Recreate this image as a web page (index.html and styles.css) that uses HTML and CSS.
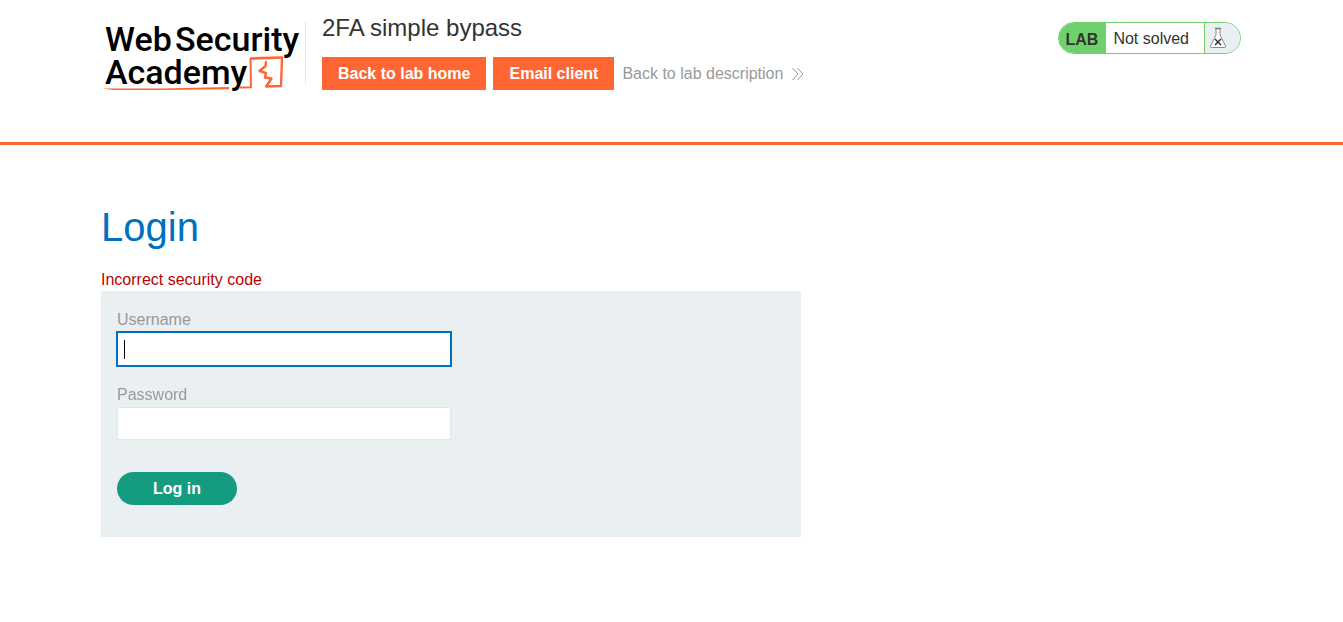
FILE: index.html
```html
<!DOCTYPE html>
<html lang="en">
<head>
<meta charset="utf-8">
<meta name="viewport" content="width=device-width, initial-scale=1">
<title>2FA simple bypass</title>
<link rel="stylesheet" href="styles.css">
</head>
<body>
<header class="lab-header">
  <div class="container lab-header-row">
    <a class="logo" href="#" aria-label="Web Security Academy">
      <svg width="204" height="72" viewBox="0 0 204 72">
        <g class="logo-text">
          <text x="4" y="29">Web</text>
          <text x="74" y="29">Security</text>
          <text x="4" y="62">Academy</text>
        </g>
        <g fill="none" stroke="#ff6633" stroke-linejoin="round" stroke-linecap="round">
          <path fill="#ff6633" stroke="none" d="M1 66.500L60 66.500L128 65V67.200L60 68L12 68Z"/>
          <path stroke-width="2" d="M139 65.500L150 65.200L149.500 37"/>
          <path stroke-width="2.600" d="M150 36.500L181 35.500"/>
          <path stroke-width="2.300" d="M181 36L180 64L165 64.500"/>
          <path stroke-width="2.400" d="M165 40L164.500 44L158.500 49L165 51L164 55.500L170.500 56.500L165.500 64"/>
        </g>
      </svg>
    </a>
    <div class="lab-title">
      <h2>2FA simple bypass</h2>
      <nav class="lab-links">
        <a class="button-orange" href="#">Back to lab home</a>
        <a class="button-orange" href="#">Email client</a>
        <a class="link-back" href="#">Back to lab description
          <svg width="12" height="14" viewBox="0 0 12 14" fill="none" stroke="#9a9a9a" stroke-width="1"><path d="M.5 1L6 7L.5 13M5.5 1L11 7L5.5 13"/></svg>
        </a>
      </nav>
    </div>
    <div class="lab-status">
      <span class="status-tag">LAB</span>
      <span class="status-text">Not solved</span>
      <span class="status-icon">
        <svg width="18" height="22" viewBox="0 0 18 22" fill="none">
          <path fill="#fff" stroke="#8a8a8a" d="M7 1.500V8L1.500 19Q1 20.500 2.500 20.500H15.500Q17 20.500 16.500 19L11 8V1.500"/>
          <path stroke="#777" stroke-width="1.500" d="M6 1.500H12"/>
          <path stroke="#333" stroke-width="1.500" d="M6 12L12 18M12 12L6 18"/>
        </svg>
      </span>
    </div>
  </div>
</header>
<main class="container">
  <h1>Login</h1>
  <p class="warning">Incorrect security code</p>
  <form class="login-form">
    <label for="username">Username</label>
    <input id="username" type="text" name="username" autofocus>
    <label for="password">Password</label>
    <input id="password" type="password" name="password">
    <button type="submit">Log in</button>
  </form>
</main>
</body>
</html>
```
FILE: styles.css
```css
* {
  box-sizing: border-box;
}

body {
  margin: 0;
  background: #fff;
  color: #333332;
  font: 16px/24px "Liberation Sans", Arial, sans-serif;
}

.container {
  max-width: 1141px;
  margin: 0 auto;
  padding-right: 1px;
}

.lab-header {
  padding: 14px 16px 52px;
  border-bottom: 3px solid #ff6633;
}

.lab-header-row {
  display: flex;
  align-items: flex-start;
}

.logo {
  height: 62px;
  margin-top: 8px;
  border-right: 1px solid #e5e5e5;
}

.logo svg {
  display: block;
  overflow: visible;
}

.logo-text {
  fill: #000;
  font-family: Roboto, sans-serif;
  font-size: 34px;
  font-weight: 500;
}

.lab-title {
  flex: 1;
  padding-left: 16px;
}

.lab-title h2 {
  margin: 0;
  font-size: 24px;
  line-height: 28px;
  font-weight: 400;
}

.lab-links {
  display: flex;
  flex-wrap: wrap;
  align-items: center;
  gap: 7px;
  margin-top: 15px;
}

.button-orange {
  padding: 0 16px;
  background: #ff6633;
  color: #fff;
  font-weight: 700;
  line-height: 33px;
  text-decoration: none;
}

.link-back {
  display: flex;
  align-items: center;
  gap: 9px;
  padding-left: 1px;
  color: #999;
  text-decoration: none;
}

.lab-status {
  display: flex;
  height: 32px;
  margin-top: 8px;
  border: 1px solid #6fd16b;
  border-radius: 16px;
  overflow: hidden;
  line-height: 31px;
}

.status-tag {
  padding: 1px 8px 0 7px;
  background: #6fd16b;
  font-weight: 700;
}

.status-text {
  padding: 0 15px 0 7px;
}

.status-icon {
  display: flex;
  align-items: center;
  width: 36px;
  padding-left: 4px;
  border-left: 1px solid #6fd16b;
  background: #eaeff2;
}

main h1 {
  margin: 58px 0 0;
  color: #0071bc;
  font-size: 40px;
  line-height: 48px;
  font-weight: 400;
}

.warning {
  margin: 17px 0 0;
  color: #bb0000;
  line-height: 23px;
}

.login-form {
  display: flex;
  flex-direction: column;
  align-items: flex-start;
  max-width: 700px;
  padding: 16px 16px 32px;
  background: #eaeff2;
}

.login-form label {
  color: #999;
  line-height: 25px;
}

.login-form input {
  width: 50%;
  height: 33px;
  margin-bottom: 17px;
  padding: 0 6px;
  border: 1px solid #e5e5e5;
  background: #fff;
  font: inherit;
}

.login-form input:focus {
  height: 34px;
  margin-bottom: 16px;
  border-color: #0071bc;
  outline: 1px solid #0071bc;
  caret-color: transparent;
  background: linear-gradient(#000, #000) 6px center / 1px 19px no-repeat #fff;
}

.login-form button {
  width: 120px;
  height: 33px;
  margin-top: 15px;
  border: 0;
  border-radius: 17px;
  background: #159b80;
  color: #fff;
  font: inherit;
  font-weight: 700;
}
```
